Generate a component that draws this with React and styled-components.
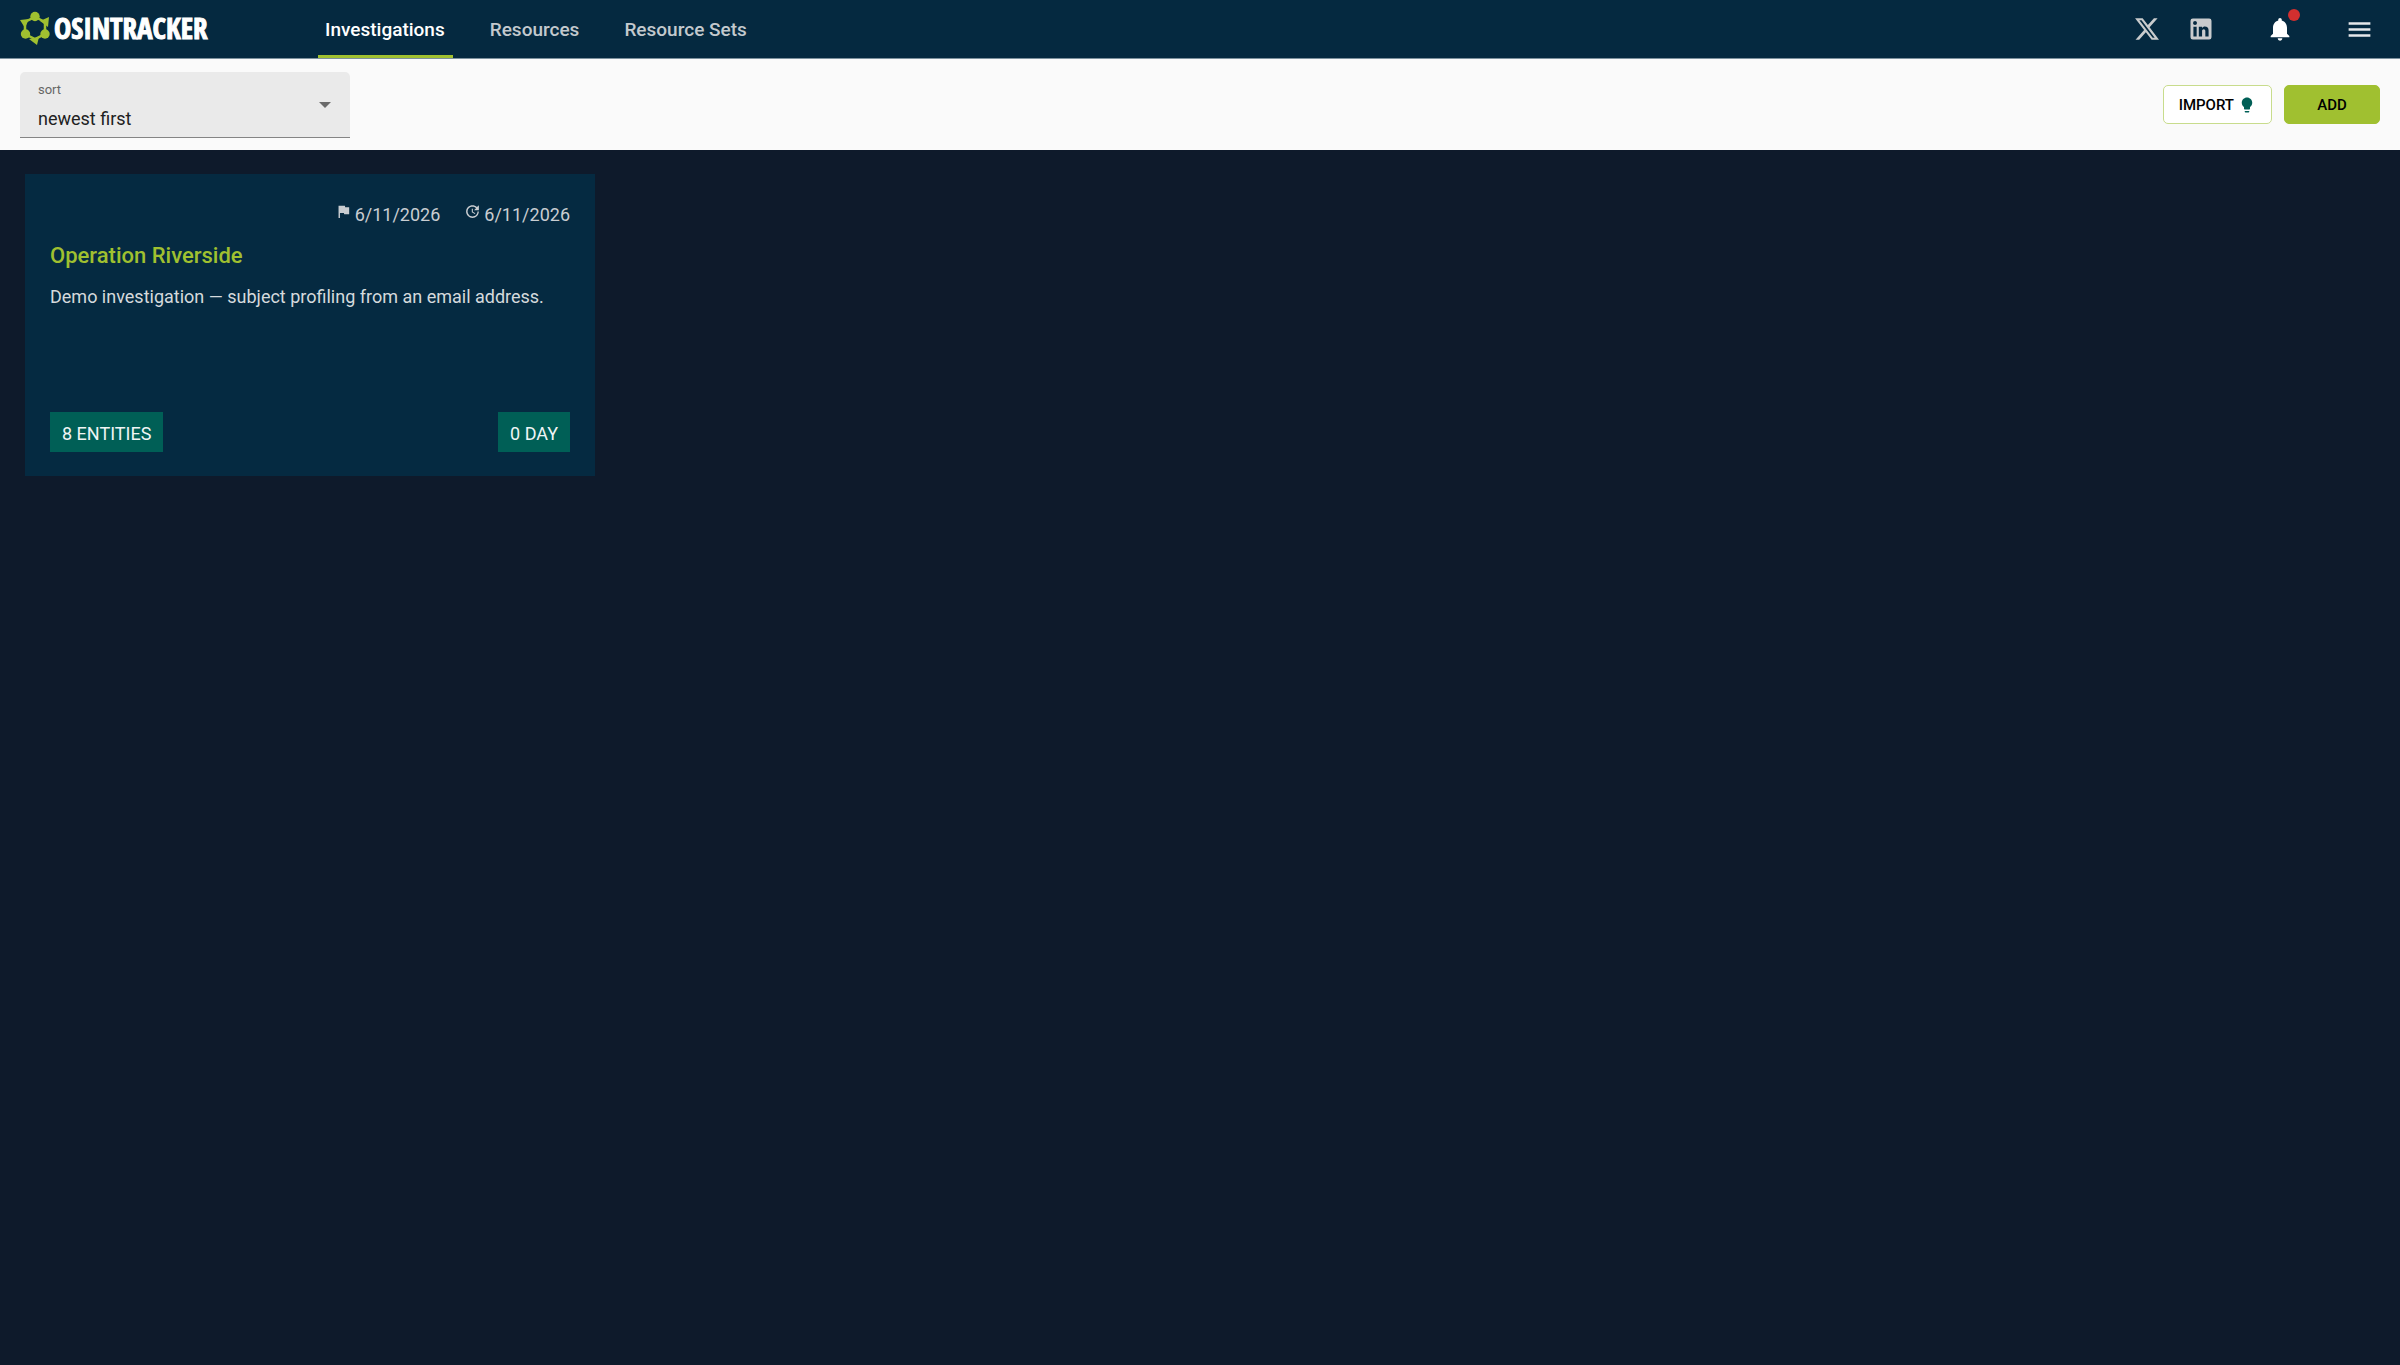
import React, { useState } from "react";
import styled, { createGlobalStyle } from "styled-components";
import { MdFlag, MdUpdate, MdLightbulb, MdNotifications, MdMenu } from "react-icons/md";

const GlobalStyle = createGlobalStyle`
  *, *::before, *::after { box-sizing: border-box; }
  body {
    margin: 0;
    background: #0e1a2b;
    font-family: Roboto, "Liberation Sans", sans-serif;
    font-size: 18px;
    line-height: 24px;
  }
  button, select { font-family: inherit; }
`;

const Header = styled.header`
  display: flex;
  align-items: stretch;
  height: 59px;
  padding: 0 26px 0 19px;
  background: #052940;
  border-bottom: 1px solid #7d919e;
`;

const Brand = styled.a`
  display: flex;
  align-items: center;
  gap: 3px;
  width: 299px;
  padding-bottom: 2px;
  color: #ffffff;
  text-decoration: none;
`;

const BrandName = styled.span`
  font-family: "Liberation Sans Narrow", "Open Sans Condensed", "Roboto Condensed", Roboto, sans-serif;
  font-size: 29px;
  font-weight: 900;
  -webkit-text-stroke: 1px #ffffff;
`;

const Nav = styled.nav`
  display: flex;
  flex: 1;
  gap: 30px;
`;

const Tab = styled.a`
  display: flex;
  align-items: center;
  padding: 4px 8px 0 7px;
  border-bottom: 3px solid ${(p) => (p.$active ? "#a0c030" : "transparent")};
  color: ${(p) => (p.$active ? "#ffffff" : "#c3c9ce")};
  font-size: 19px;
  font-weight: 500;
  text-decoration: none;
`;

const Actions = styled.div`
  display: flex;
  align-items: center;
  gap: 51px;
`;

const Socials = styled.div`
  display: flex;
  align-items: center;
  gap: 28px;
`;

const IconLink = styled.a`
  display: flex;
  color: #c9cbcd;
`;

const IconButton = styled.button`
  position: relative;
  display: flex;
  padding: 0;
  border: 0;
  background: none;
  color: ${(p) => (p.$dim ? "#e6e8ea" : "#ffffff")};
  cursor: pointer;
`;

const Dot = styled.span`
  position: absolute;
  top: -6px;
  right: -6px;
  width: 12px;
  height: 12px;
  border-radius: 50%;
  background: #d32f2f;
`;

const Toolbar = styled.div`
  display: flex;
  align-items: center;
  justify-content: space-between;
  height: 91px;
  padding: 0 20px;
  background: #fafafa;
`;

const Field = styled.div`
  position: relative;
  display: flex;
  flex-direction: column;
  width: 330px;
  height: 66px;
  border-bottom: 1px solid #858585;
  border-radius: 5px 5px 0 0;
  background: #eaeaea;
`;

const FieldLabel = styled.label`
  padding: 10px 18px 0;
  color: #666666;
  font-size: 13px;
  line-height: 16px;
`;

const Select = styled.select`
  flex: 1;
  padding: 3px 40px 0 18px;
  border: 0;
  background: none;
  color: #212121;
  font-size: 18px;
  appearance: none;
  cursor: pointer;
`;

const Arrow = styled.svg`
  position: absolute;
  top: 30px;
  right: 19px;
  pointer-events: none;
`;

const Buttons = styled.div`
  display: flex;
  gap: 12px;
`;

const Button = styled.button`
  display: flex;
  align-items: center;
  justify-content: center;
  gap: 4px;
  min-width: 96px;
  height: 39px;
  padding: 0 15px;
  border: 1px solid ${(p) => (p.$primary ? "#a0c030" : "#c8dc8c")};
  border-radius: 5px;
  background: ${(p) => (p.$primary ? "#a0c030" : "#ffffff")};
  color: #000000;
  font-size: 15px;
  font-weight: 500;
  cursor: pointer;
`;

const Grid = styled.main`
  display: grid;
  grid-template-columns: repeat(auto-fill, 570px);
  gap: 24px;
  padding: 24px 25px;
`;

const Card = styled.article`
  display: flex;
  flex-direction: column;
  height: 302px;
  padding: 24px 25px;
  background: #052a41;
`;

const Dates = styled.div`
  display: flex;
  justify-content: flex-end;
  gap: 24px;
  padding-top: 5px;
  color: #c9cdd1;
`;

const DateItem = styled.span`
  display: flex;
  gap: 3px;
`;

const Title = styled.h2`
  margin: 15px 0;
  color: #a0c030;
  font-size: 22px;
  font-weight: 500;
  line-height: 28px;
`;

const Description = styled.p`
  margin: 0;
  flex: 1;
  color: #d5dadd;
`;

const Chips = styled.div`
  display: flex;
  justify-content: space-between;
`;

const Chip = styled.span`
  padding: 10px 12px 6px;
  background: #005f56;
  color: #f0f5f5;
`;

const LogoMark = () => (
  <svg width="32" height="34" viewBox="0 0 32 34" aria-hidden="true" fill="#a0c030">
    <path d="M16 6 26 11V23L16 28 6 23V11Z" fill="none" stroke="#a0c030" strokeWidth="2.5" />
    <circle cx="16" cy="5.5" r="4.7" />
    <circle cx="6.5" cy="23" r="4.7" />
    <circle cx="26" cy="23" r="4.7" />
    <path d="M30 6 21 10 29 16ZM1 9 10 8 6 17ZM18 34 20 26 10 28Z" />
  </svg>
);

const XLogo = () => (
  <svg width="24" height="22" viewBox="1.2 2.1 21.6 19.8" fill="currentColor" aria-hidden="true">
    <path d="M18.244 2.25h3.308l-7.227 8.26 8.502 11.24H16.17l-5.214-6.817L4.99 21.75H1.68l7.73-8.835L1.254 2.25H8.08l4.713 6.231zm-1.161 17.52h1.833L7.084 4.126H5.117z" />
  </svg>
);

const LinkedIn = () => (
  <svg width="28" height="28" viewBox="0 0 24 24" fill="currentColor" aria-hidden="true">
    <path d="M19 3a2 2 0 0 1 2 2v14a2 2 0 0 1-2 2H5a2 2 0 0 1-2-2V5a2 2 0 0 1 2-2h14m-.5 15.5v-5.3a3.26 3.26 0 0 0-3.26-3.26c-.85 0-1.84.52-2.32 1.3v-1.11h-2.79v8.37h2.79v-4.93c0-.77.62-1.4 1.39-1.4a1.4 1.4 0 0 1 1.4 1.4v4.93h2.79M6.88 8.56a1.68 1.68 0 0 0 1.68-1.68c0-.93-.75-1.69-1.68-1.69a1.69 1.69 0 0 0-1.69 1.69c0 .93.76 1.68 1.69 1.68m1.39 9.94v-8.37H5.5v8.37h2.77z" />
  </svg>
);

const tabs = ["Investigations", "Resources", "Resource Sets"];

const investigations = [
  {
    title: "Operation Riverside",
    description: "Demo investigation — subject profiling from an email address.",
    created: "6/11/2026",
    updated: "6/11/2026",
    entities: "8 ENTITIES",
    age: "0 DAY",
  },
];

export default function App() {
  const [sort, setSort] = useState("newest");
  return (
    <>
      <GlobalStyle />
      <Header>
        <Brand href="#">
          <LogoMark />
          <BrandName>OSINTRACKER</BrandName>
        </Brand>
        <Nav>
          {tabs.map((tab, i) => (
            <Tab key={tab} href="#" $active={i === 0}>{tab}</Tab>
          ))}
        </Nav>
        <Actions>
          <Socials>
            <IconLink href="#" aria-label="X"><XLogo /></IconLink>
            <IconLink href="#" aria-label="LinkedIn"><LinkedIn /></IconLink>
          </Socials>
          <IconButton aria-label="Notifications">
            <MdNotifications size={28} />
            <Dot />
          </IconButton>
          <IconButton $dim aria-label="Menu"><MdMenu size={29} /></IconButton>
        </Actions>
      </Header>
      <Toolbar>
        <Field>
          <FieldLabel htmlFor="sort">sort</FieldLabel>
          <Select id="sort" value={sort} onChange={(e) => setSort(e.target.value)}>
            <option value="newest">newest first</option>
            <option value="oldest">oldest first</option>
          </Select>
          <Arrow width="12" height="6" viewBox="0 0 12 6" aria-hidden="true">
            <path d="M0 0h12L6 6Z" fill="#6b6b6b" />
          </Arrow>
        </Field>
        <Buttons>
          <Button>IMPORT <MdLightbulb size={18} color="#005f56" /></Button>
          <Button $primary>ADD</Button>
        </Buttons>
      </Toolbar>
      <Grid>
        {investigations.map((item) => (
          <Card key={item.title}>
            <Dates>
              <DateItem><MdFlag size={17} />{item.created}</DateItem>
              <DateItem><MdUpdate size={17} />{item.updated}</DateItem>
            </Dates>
            <Title>{item.title}</Title>
            <Description>{item.description}</Description>
            <Chips>
              <Chip>{item.entities}</Chip>
              <Chip>{item.age}</Chip>
            </Chips>
          </Card>
        ))}
      </Grid>
    </>
  );
}
